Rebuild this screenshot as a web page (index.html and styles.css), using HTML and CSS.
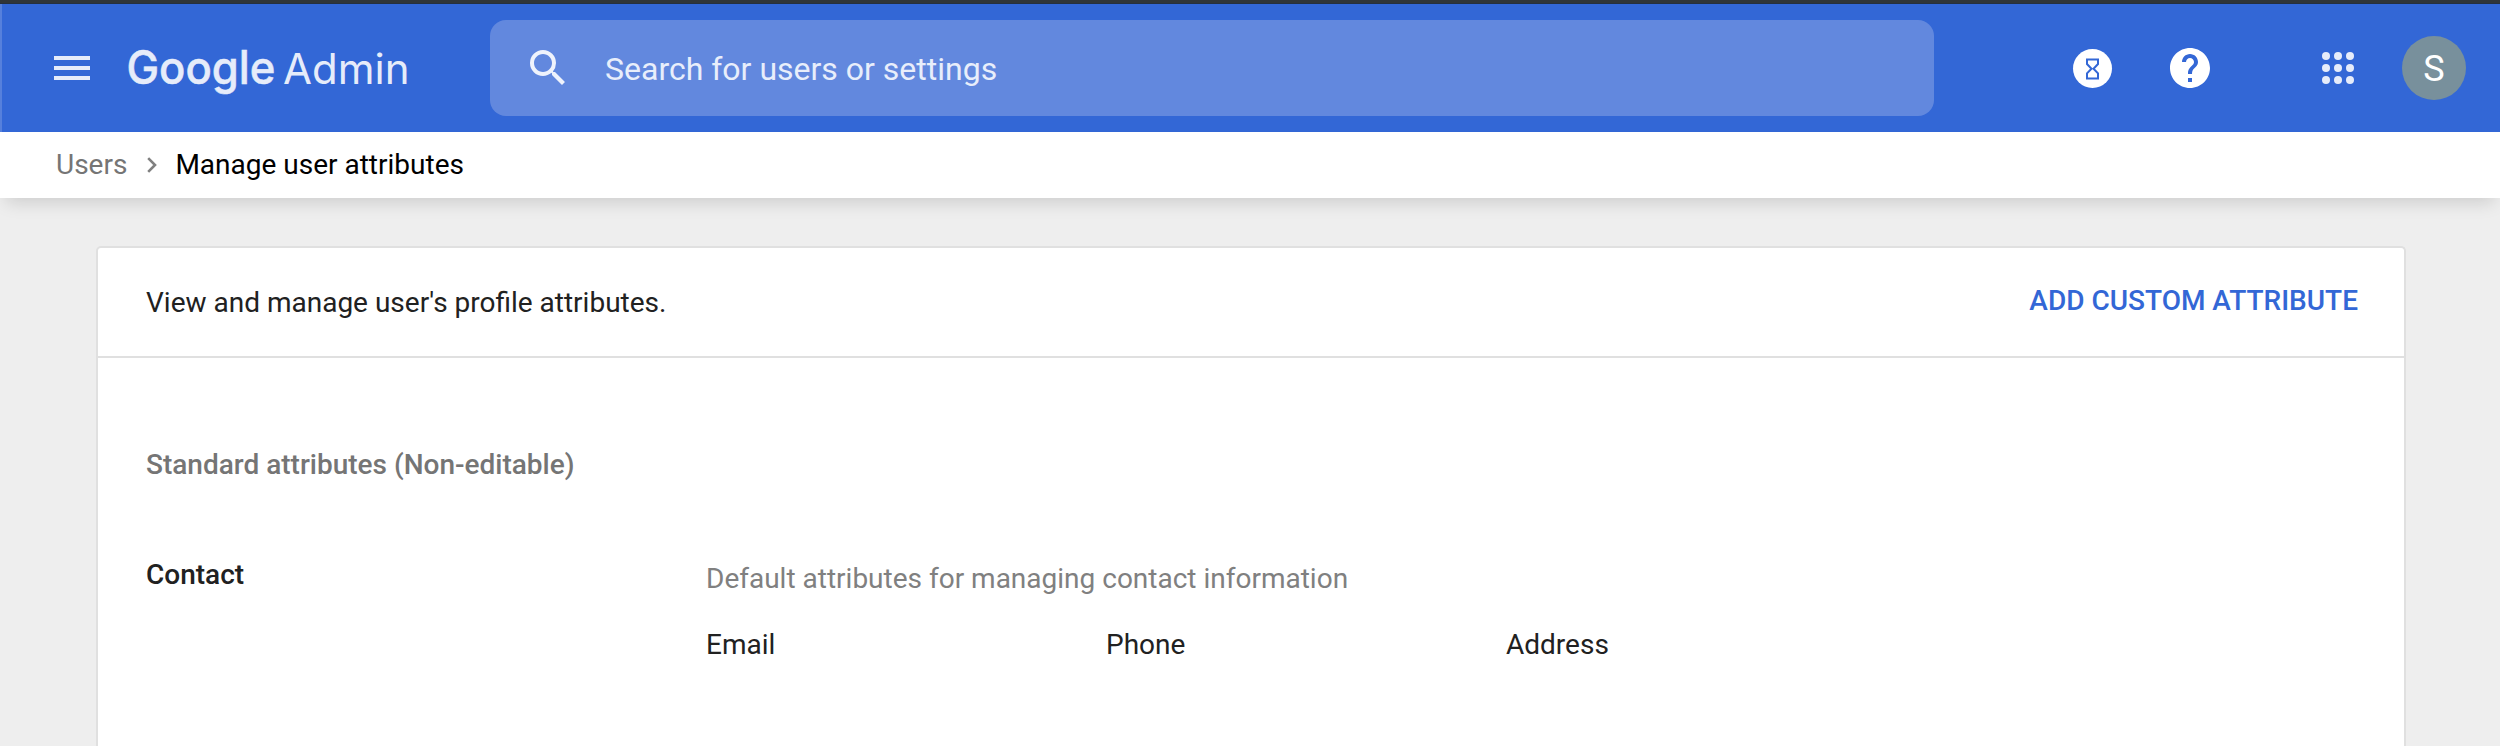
FILE: index.html
```html
<!DOCTYPE html>
<html lang="en">
<head>
<meta charset="utf-8">
<title>Google Admin</title>
<link rel="stylesheet" href="styles.css">
</head>
<body>
<div class="frame-edge"></div>
<header class="topbar">
  <svg class="menu" viewBox="0 0 36 24"><path d="M0 0h36v4H0zM0 10h36v4H0zM0 20h36v4H0z"/></svg>
  <svg class="logo" viewBox="0 0 290 60" role="img">
    <text class="logo-google" x="-0.5" y="45.500" textLength="149" lengthAdjust="spacingAndGlyphs">Google</text>
    <text class="logo-admin" x="156" y="46" textLength="126.500" lengthAdjust="spacingAndGlyphs">Admin</text>
  </svg>
  <div class="search">
    <svg class="search-icon" viewBox="0 0 24 24"><path d="M15.5 14h-.79l-.28-.27A6.471 6.471 0 0 0 16 9.5 6.5 6.5 0 1 0 9.5 16c1.61 0 3.09-.59 4.23-1.57l.27.28v.79l5 4.99L20.49 19l-4.99-5zm-6 0C7.01 14 5 11.99 5 9.5S7.01 5 9.5 5 14 7.01 14 9.5 11.99 14 9.5 14z"/></svg>
    <span class="search-text">Search for users or settings</span>
  </div>
  <nav class="actions">
    <svg class="tasks" viewBox="0 0 39 39"><circle cx="19.5" cy="19.5" r="19.5" fill="#fff"/><path d="M14 10.5h11v4.5l-4.500 4.700 4.500 4.700v5H14v-5l4.500-4.700L14 15z" fill="none" stroke="#3367d6" stroke-width="2"/></svg>
    <svg class="help" viewBox="2 2 20 20"><path fill="#fff" d="M12 2C6.480 2 2 6.480 2 12s4.480 10 10 10 10-4.480 10-10S17.520 2 12 2zm1 17h-2v-2h2v2zm2.070-7.750l-.9.920C13.450 12.900 13 13.500 13 15h-2v-.5c0-1.100.450-2.100 1.170-2.830l1.240-1.260c.370-.360.590-.860.590-1.410 0-1.100-.9-2-2-2s-2 .9-2 2H8c0-2.210 1.790-4 4-4s4 1.790 4 4c0 .880-.360 1.680-.930 2.250z"/></svg>
    <svg class="apps" viewBox="0 0 32 32"><circle cx="4" cy="4" r="4"/><circle cx="16" cy="4" r="4"/><circle cx="28" cy="4" r="4"/><circle cx="4" cy="16" r="4"/><circle cx="16" cy="16" r="4"/><circle cx="28" cy="16" r="4"/><circle cx="4" cy="28" r="4"/><circle cx="16" cy="28" r="4"/><circle cx="28" cy="28" r="4"/></svg>
    <span class="avatar">S</span>
  </nav>
</header>
<div class="crumbs">
  <span class="crumb-parent">Users</span>
  <svg class="chevron" viewBox="0 0 10 16"><path d="M1.200 1.200L8 8l-6.800 6.800" fill="none" stroke="#808080" stroke-width="2.600"/></svg>
  <span class="crumb-current">Manage user attributes</span>
</div>
<main class="page">
  <section class="card">
    <div class="card-head">
      <span class="intro">View and manage user's profile attributes.</span>
      <span class="add">ADD CUSTOM ATTRIBUTE</span>
    </div>
    <h2 class="section-title">Standard attributes (Non-editable)</h2>
    <div class="group">
      <h3 class="group-name">Contact</h3>
      <div class="group-body">
        <p class="group-desc">Default attributes for managing contact information</p>
        <div class="fields"><span>Email</span><span>Phone</span><span>Address</span></div>
      </div>
    </div>
  </section>
</main>
</body>
</html>
```
FILE: styles.css
```css
* { box-sizing: border-box; }
html, body { height: 746px; overflow: hidden; }
body {
  margin: 0;
  display: flex;
  flex-direction: column;
  background: #eee;
  color: #212121;
  font: 28px/40px Roboto, sans-serif;
}
h2, h3, p { margin: 0; font-size: 28px; }
svg { display: block; flex: none; overflow: visible; }

.frame-edge { flex: none; height: 4px; background: #303538; border-bottom: 1px solid #25303f; }
.topbar {
  flex: none;
  height: 128px;
  display: flex;
  align-items: center;
  padding: 0 34px 0 52px;
  background: #3367d6;
  border-left: 2px solid #5680dc;
}
.menu { width: 36px; height: 24px; fill: #e6ecfa; }
.logo { width: 290px; height: 60px; margin-left: 37px; fill: #e6ecfa; font-family: Inter, sans-serif; }
.logo-google { font-size: 46px; font-weight: 500; stroke: #e6ecfa; stroke-width: .5px; }
.logo-admin { font-size: 42px; }
.search {
  width: 1444px;
  height: 96px;
  margin-left: 73px;
  padding-left: 34px;
  display: flex;
  align-items: center;
  border-radius: 16px;
  background: #6288de;
}
.search-icon { width: 48px; height: 48px; fill: #eff3fc; }
.search-text { margin-left: 33px; padding-top: 2px; font-size: 32px; color: #e8eefb; }
.actions { margin-left: auto; display: flex; align-items: center; }
.tasks { width: 39px; height: 39px; }
.help { width: 40px; height: 40px; margin-left: 58px; }
.apps { width: 32px; height: 32px; margin-left: 112px; fill: #e6ecfa; }
.avatar {
  width: 64px;
  height: 64px;
  margin-left: 48px;
  border-radius: 50%;
  background: #78909c;
  color: #fff;
  font-size: 36px;
  line-height: 66px;
  text-align: center;
}

.crumbs {
  flex: none;
  height: 66px;
  display: flex;
  align-items: center;
  padding: 0 56px;
  background: #fff;
  color: #000;
  box-shadow: 0 10px 18px -6px rgba(0, 0, 0, .15);
}
.crumb-parent { color: #757575; }
.chevron { width: 10px; height: 16px; margin: 0 18px 0 20px; }

.page { flex: 1; min-height: 0; padding: 48px 94px 0 96px; }
.card {
  height: 100%;
  border: 2px solid #e0e0e0;
  border-bottom: 0;
  border-radius: 5px 5px 0 0;
  background: #fff;
}
.card-head {
  height: 110px;
  display: flex;
  justify-content: space-between;
  padding: 35px 46px 0 48px;
  border-bottom: 2px solid #e0e0e0;
}
.add { margin-top: -2px; color: #3367d6; font-weight: 500; }
.section-title { padding: 87px 48px 0; color: #757575; font-weight: 500; }
.group { display: flex; padding: 70px 48px 0; }
.group-name { width: 560px; font-weight: 500; }
.group-desc { padding-top: 4px; color: #808080; }
.fields { display: grid; grid-template-columns: repeat(3, 400px); margin-top: 26px; }
```
